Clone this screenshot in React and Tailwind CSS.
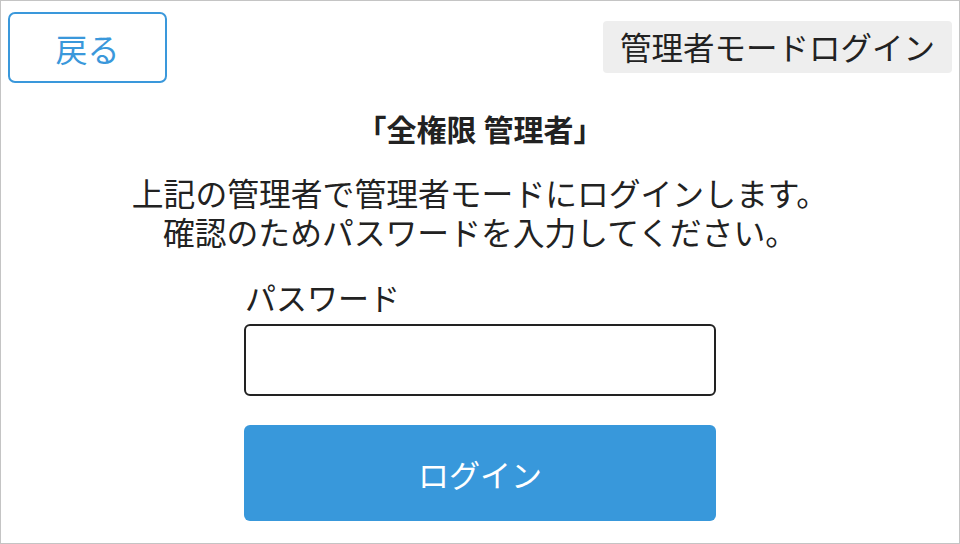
import React from "react";

export default function App() {
  return (
    <div
      className="w-[960px] h-[544px] border border-[#c4c4c4] bg-white text-[#222] overflow-hidden"
      style={{ fontFamily: '"Noto Sans CJK JP", "Noto Sans", sans-serif' }}
    >
      {/* header */}
      <div className="flex items-start justify-between pl-[7px] pr-[7px] pt-[11px]">
        <button className="w-[159px] h-[71px] rounded-[7px] border-2 border-[#3a98db] text-[#3a98db] text-[32px] leading-none flex items-center justify-center">
          戻る
        </button>
        <div className="mt-[9px] h-[52px] px-[17px] rounded-[4px] bg-[#eeeeee] text-[31.5px] leading-none flex items-center">
          管理者モードログイン
        </div>
      </div>

      <div className="flex flex-col items-center">
        <h1 className="mt-[25px] text-[30px] font-bold leading-[40px]">「全権限 管理者」</h1>
        <p className="mt-[25px] text-[31.8px] leading-[39px] text-center">
          上記の管理者で管理者モードにログインします。
          <br />
          確認のためパスワードを入力してください。
        </p>

        <div className="mt-[26px] w-[472px] flex flex-col">
          <label className="text-[31px] leading-[40px] pl-[1px]">パスワード</label>
          <input
            type="password"
            className="mt-[7px] h-[72px] w-full rounded-[6px] border-2 border-[#222] bg-white px-3 outline-none"
          />
          <button className="mt-[29px] h-[96px] w-full rounded-[6px] bg-[#3898db] text-white text-[31px] leading-none">
            ログイン
          </button>
        </div>
      </div>
    </div>
  );
}
